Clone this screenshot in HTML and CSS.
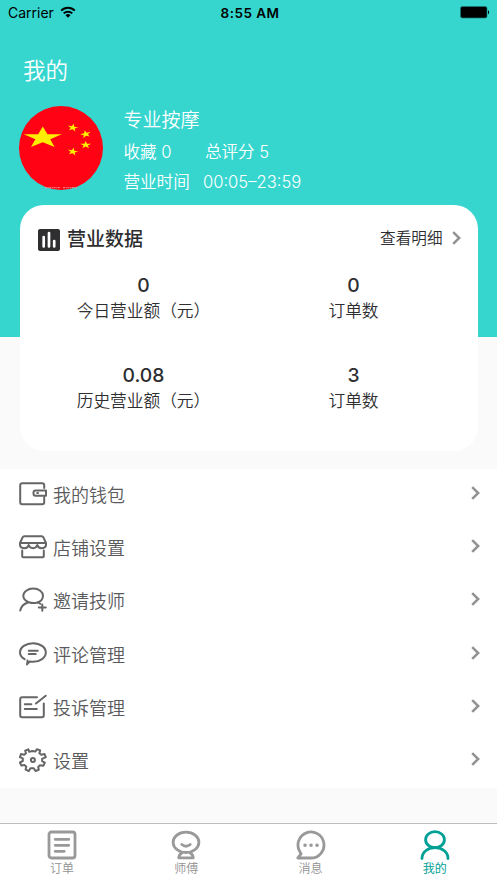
FILE: index.html
```html
<!DOCTYPE html>
<html lang="zh-CN">
<head>
<meta charset="utf-8">
<meta name="viewport" content="width=device-width, initial-scale=1">
<title>我的</title>
<link rel="stylesheet" href="styles.css">
</head>
<body>
<div class="app">
  <header class="hero">
    <div class="status">
      <div class="carrier"><span>Carrier</span>
        <svg width="16" height="13" viewBox="0 0 16 13"><g fill="none" stroke="#000" stroke-width="2"><path d="M1.2 4.6a9.6 9.6 0 0 1 13.6 0"/><path d="M3.7 7.4a6.1 6.1 0 0 1 8.6 0"/></g><path d="M8 11.8 5.5 9.3a3.5 3.5 0 0 1 5 0z"/></svg>
      </div>
      <time class="clock">8:55 AM</time>
      <svg class="battery" width="30" height="13" viewBox="0 0 30 13"><rect x=".5" y=".5" width="26.5" height="11.5" rx="1.8" fill="#000" stroke="#147c77" stroke-width=".7"/><path d="M28 4.3c1.6.5 1.6 3.4 0 4z"/></svg>
    </div>
    <h1 class="title">我的</h1>
    <section class="profile">
      <svg class="avatar" width="84" height="84" viewBox="0 0 84 84">
        <defs><path id="star" d="M0-10 2.3-3.1 9.5-3.1 3.7 1.2 5.9 8.1 0 3.9-5.9 8.1-3.7 1.2-9.5-3.1-2.3-3.1z"/></defs>
        <circle cx="42" cy="42" r="42" fill="#ff0213"/>
        <g fill="#ffee00">
          <use href="#star" transform="translate(23.8 31.8) scale(2 1.14)"/>
          <use href="#star" transform="translate(53.8 21.7) rotate(12) scale(.56 .4)"/>
          <use href="#star" transform="translate(66.7 28.2) rotate(-14) scale(.57 .4)"/>
          <use href="#star" transform="translate(66.7 39) scale(.57 .4)"/>
          <use href="#star" transform="translate(53.8 45.7) rotate(12) scale(.56 .4)"/>
        </g>
        <path d="M26 81.7h15m3 0h14" stroke="#ff9292" stroke-width="1" stroke-dasharray="2 .7 1 .6"/>
      </svg>
      <div class="info">
        <div class="name">专业按摩</div>
        <div class="meta"><span class="fav">收藏 0</span><span>总评分 5</span></div>
        <div class="meta"><span class="hours">营业时间</span><span>00:05–23:59</span></div>
      </div>
    </section>
  </header>

  <section class="card">
    <div class="card-head">
      <svg width="22" height="22" viewBox="0 0 22 22"><rect width="22" height="22" rx="2" fill="#2e2e31"/><path d="M5.7 8v9.5M11 4v13.5M16.2 12v5.5" stroke="#fff" stroke-width="2.7" stroke-linecap="round"/></svg>
      <h2>营业数据</h2>
      <a class="detail">查看明细</a>
      <svg width="9" height="14" viewBox="0 0 9 14"><path class="chev" d="M1.2 1.2 7.2 7l-6 5.8"/></svg>
    </div>
    <div class="stats">
      <div class="stat"><b>0</b><span>今日营业额（元）</span></div>
      <div class="stat"><b>0</b><span>订单数</span></div>
      <div class="stat"><b>0.08</b><span>历史营业额（元）</span></div>
      <div class="stat"><b>3</b><span>订单数</span></div>
    </div>
  </section>

  <nav class="menu">
    <a class="row"><svg class="icon" width="28" height="26" viewBox="0 0 28 26"><path d="M25.2 7V4.2a2 2 0 0 0-2-2H3.2a2 2 0 0 0-2 2v17a2 2 0 0 0 2 2h20a2 2 0 0 0 2-2v-4.7M27 9.4H16.5a2 2 0 0 0-2 2v1.4a2 2 0 0 0 2 2H27z"/><path d="M18.2 12.1h.8"/></svg><span>我的钱包</span><svg class="arrow" width="9" height="14" viewBox="0 0 9 14"><path class="chev" d="M1.2 1.2 7.2 7l-6 5.8"/></svg></a>
    <a class="row"><svg class="icon" width="28" height="26" viewBox="0 0 28 26"><path d="M5.2 2.2h17.6q1 0 1.5 1L27 9v2.2q-.6 3-4.5 3-3.3 0-4.2-3.2-1.2 3.2-4.3 3.2T9.7 11q-.9 3.2-4.2 3.2-3.9 0-4.5-3V9l2.7-5.8q.5-1 1.5-1zM1.2 9h25.6M3.2 16.5v5.7q0 1 1 1h19.6q1 0 1-1v-5.7"/></svg><span>店铺设置</span><svg class="arrow" width="9" height="14" viewBox="0 0 9 14"><path class="chev" d="M1.2 1.2 7.2 7l-6 5.8"/></svg></a>
    <a class="row"><svg class="icon" width="28" height="26" viewBox="0 0 28 26"><path d="M9.8 15.3C6.3 13.9 4.3 11.5 4.3 8.8c0-4 4.4-7.2 10-7.2s9.7 3.2 9.7 7.2c0 3.3-2.4 5.8-6 6.8-2.3.7-5.3.6-8.2-.3Q2.5 17.3 1.2 23.5M18 15.6q1.9.2 3.3 1.2M19.8 20.6h7M23.3 17.6v6.2"/></svg><span>邀请技师</span><svg class="arrow" width="9" height="14" viewBox="0 0 9 14"><path class="chev" d="M1.2 1.2 7.2 7l-6 5.8"/></svg></a>
    <a class="row"><svg class="icon" width="28" height="26" viewBox="0 0 28 26"><path d="M5.6 18.2C2.8 16.5 1 14.2 1 11.5 1 6.3 6.8 2.2 14 2.2s12.8 4.1 12.8 9.3-5.7 9.3-12.8 9.3q-1.8 0-3.3-.3L8 23.4q.7-2.2.5-4M9.7 9.8h9M9.7 13h7"/></svg><span>评论管理</span><svg class="arrow" width="9" height="14" viewBox="0 0 9 14"><path class="chev" d="M1.2 1.2 7.2 7l-6 5.8"/></svg></a>
    <a class="row"><svg class="icon" width="28" height="26" viewBox="0 0 28 26"><path d="M18 3.3H3.2a2 2 0 0 0-2 2v15.9a2 2 0 0 0 2 2h19.6a2 2 0 0 0 2-2V9.5M5.8 10.2h6.5M5.8 15h12M17 9.5 26.7 1.7"/></svg><span>投诉管理</span><svg class="arrow" width="9" height="14" viewBox="0 0 9 14"><path class="chev" d="M1.2 1.2 7.2 7l-6 5.8"/></svg></a>
    <a class="row"><svg class="icon" width="28" height="26" viewBox="0 0 28 26"><path d="M10.2 4.8 9.3 2.3 6.2 3.7 7 6.2 5.2 7.7 2 7.1.9 10.2 3.8 11.4V14L.9 15.5 2.4 18.6 5.4 18 7.3 19.8 6.6 22.6 9.8 24 11.4 21.3H14.8L16.5 24 19.8 22.7 19.2 20 21 18.2 24.3 18.8 25.8 15.7 23.1 14.1V11.8L26.8 10.2 25.5 7.1 22.2 7.7 20.4 6.2 21.2 3.4 17.9 2.2 16.3 4.6 13.3 4.1z"/><circle cx="13.9" cy="12.9" r="2"/></svg><span>设置</span><svg class="arrow" width="9" height="14" viewBox="0 0 9 14"><path class="chev" d="M1.2 1.2 7.2 7l-6 5.8"/></svg></a>
  </nav>

  <nav class="tabs">
    <a class="tab"><svg width="30" height="30" viewBox="0 0 30 30"><rect x="2" y="2" width="26" height="26" rx="2.5"/><path d="M8.2 9.3h13.6M8.2 15.3h13.6M8.2 21.3h9"/></svg><span>订单</span></a>
    <a class="tab"><svg width="30" height="30" viewBox="0 0 30 30"><ellipse cx="15" cy="12.3" rx="12.9" ry="10.2"/><path d="M10.8 14.5q4.2 3.4 8.4 0M11 22.7q-3.2 2-3.2 5.2h14.4q0-3.2-3.2-5.2"/></svg><span>师傅</span></a>
    <a class="tab"><svg width="30" height="30" viewBox="0 0 30 30"><path d="M1.8 28H15A13 13 0 1 0 3.9 21.8l1.2 2.1z"/><path class="dots" d="M9 15.2h.1M15 15.2h.1M21 15.2h.1"/></svg><span>消息</span></a>
    <a class="tab active"><svg width="30" height="30" viewBox="0 0 30 30"><ellipse cx="15" cy="9.7" rx="9.4" ry="8"/><path d="M2 28.6C2 22.3 7.5 17.7 15 17.7s13 4.6 13 10.9"/></svg><span>我的</span></a>
  </nav>
</div>
</body>
</html>
```

FILE: styles.css
```css
* { box-sizing: border-box; }
body { margin: 0; background: #fafafa; color: #2e2e31; font-family: Inter, "Noto Sans CJK SC", sans-serif; }
h1, h2 { margin: 0; }
svg { display: block; flex: none; }
.app { display: flex; flex-direction: column; height: 883px; overflow: hidden; }

.hero { height: 337px; flex: none; background: #36d6cf; color: #fff; }
.status { display: grid; grid-template-columns: 1fr auto 1fr; align-items: center; height: 26px; padding: 0 7px 0 8px; color: #000; font-size: 14px; }
.carrier { display: flex; align-items: center; gap: 6px; }
.carrier span { margin-top: -1px; }
.carrier svg { margin-top: -2px; }
.clock { font-size: 13.5px; font-weight: 600; letter-spacing: .45px; padding-left: 2px; }
.battery { justify-self: end; margin-top: -1px; }
.title { margin: 28px 0 0 23px; height: 34px; line-height: 34px; font-size: 22.5px; font-weight: 350; }
.profile { display: flex; gap: 20px; margin: 18px 0 0 19.5px; }
.avatar { margin-left: -.1px; }
.info { font-weight: 350; }
.name { height: 28px; line-height: 30px; font-size: 19px; }
.meta { display: flex; height: 30px; line-height: 36px; font-size: 16.6px; }
.fav { width: 81.5px; }
.hours { width: 79.5px; }

.card { flex: none; height: 246px; margin: -132px 19.5px 0; padding: 19px 17px 0 19px; border-radius: 24px; background: #fff; }
.card-head { display: flex; align-items: center; height: 28px; }
.card-head > svg:first-child { margin: 3px 0 0 -.5px; }
.card-head h2 { margin: 3px 0 0 7px; font-size: 19px; line-height: 28px; font-weight: 500; }
.detail { margin: -2px 9px 0 auto; font-size: 15.6px; font-weight: 350; }
.chev { fill: none; stroke: #929292; stroke-width: 2.5; }
.stats { display: grid; grid-template-columns: 210px 210px; grid-auto-rows: 90px; padding-top: 20px; }
.stat { display: flex; flex-direction: column; align-items: center; }
.stat b { height: 26px; line-height: 26px; font-size: 19.3px; font-weight: 500; }
.stat span { height: 26px; line-height: 25px; font-family: "Noto Sans CJK SC", sans-serif; font-size: 16.7px; font-weight: 350; }

.menu { flex: none; margin-top: 18px; height: 319px; display: grid; grid-template-rows: repeat(6, 1fr); background: #fff; }
.row { display: flex; align-items: center; padding: 0 17px 0 19px; border-bottom: 1px solid #fdfdfd; font-size: 18px; font-weight: 350; color: #5a5a5c; }
.row span { margin: -2px 0 0 6px; }
.icon { fill: none; stroke: #666; stroke-width: 2; stroke-linecap: round; stroke-linejoin: round; margin-top: -2px; }
.arrow { margin: -4px 0 0 auto; }

.tabs { flex: none; margin-top: auto; height: 60px; display: grid; grid-template-columns: repeat(4, 1fr); border-top: 1px solid #bdbdbd; background: #fff; }
.tab { display: flex; flex-direction: column; align-items: center; padding-top: 6px; color: #929292; font-size: 12px; font-weight: 350; line-height: 17px; }
.tab svg { fill: none; stroke: #999; stroke-width: 2.8; stroke-linecap: round; stroke-linejoin: round; }
.tab .dots { stroke-width: 3.5; }
.tab.active { color: #00a096; font-weight: 400; }
.tab.active svg { stroke: #00a096; }
```
